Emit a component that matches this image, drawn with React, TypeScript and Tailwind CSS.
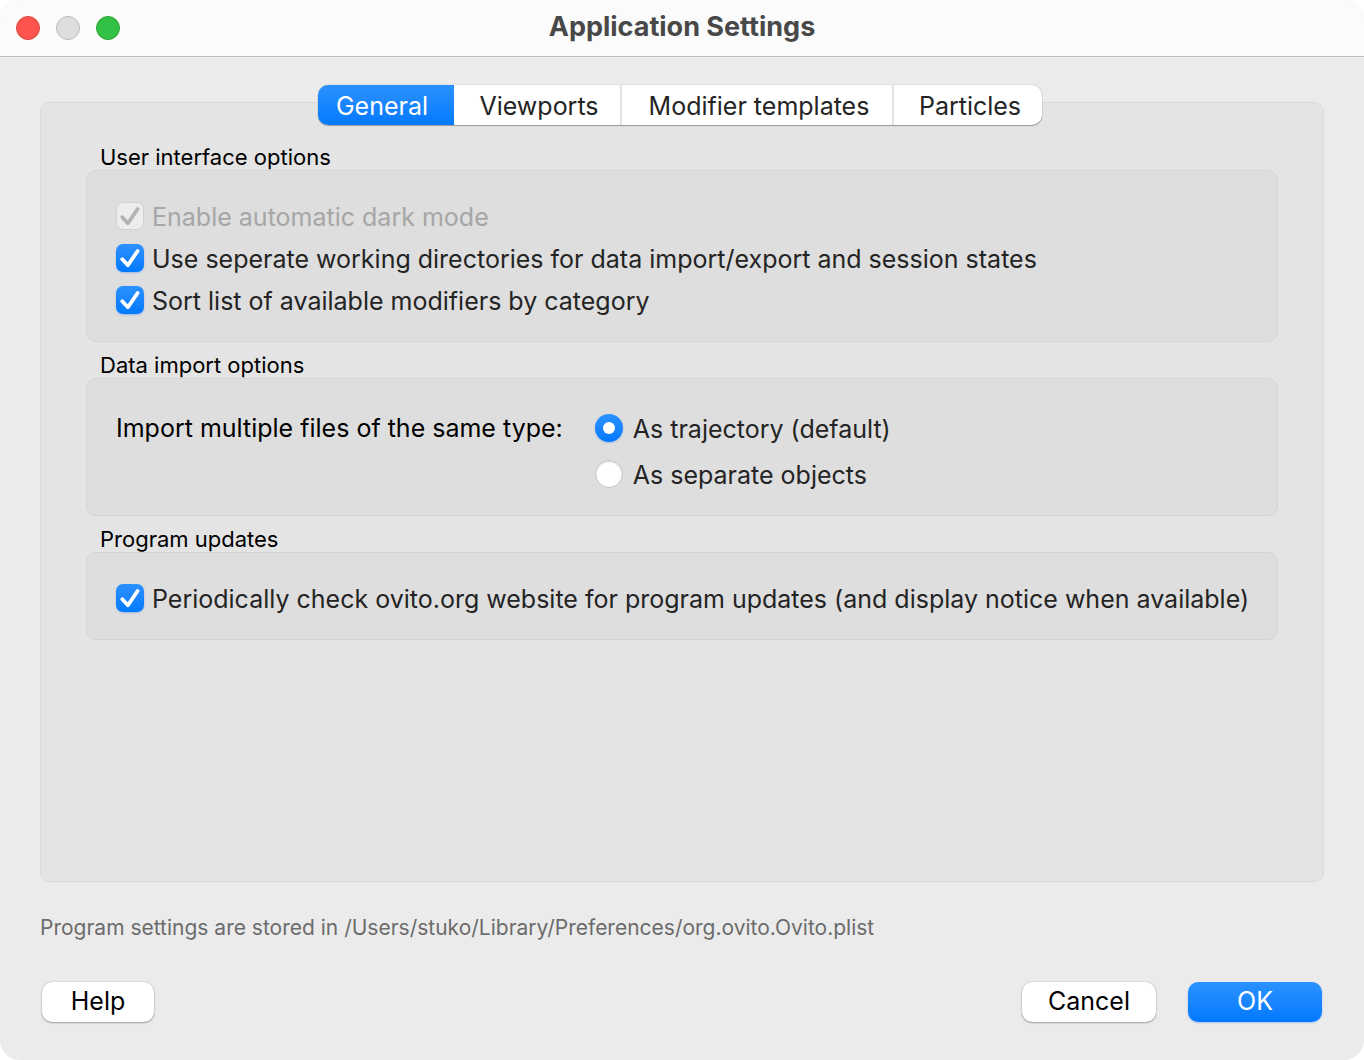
import { useState, type ReactNode } from "react";

const TABS = [
  { name: "General", width: "w-[136px]" },
  { name: "Viewports", width: "w-[168px]" },
  { name: "Modifier templates", width: "w-[272px]" },
  { name: "Particles", width: "w-[148px]" },
];

const BLUE = "bg-linear-to-b from-[#2a91ff] to-[#0079ff]";
const WHITE_BUTTON =
  "h-10 rounded-[10px] bg-white pb-0.5 text-[25px] leading-8 text-black shadow-[0_0_1px_rgba(0,0,0,0.35),0_1px_2px_rgba(0,0,0,0.3)]";

function Group({ title, pad, children }: { title: string; pad: string; children: ReactNode }) {
  return (
    <fieldset className="mb-2.5 min-w-0">
      <legend className="h-[26px] pl-3.5 text-[22px] leading-[26px] text-black">{title}</legend>
      <div className={`rounded-[10px] border border-[#d4d4d4] bg-[#dedede] ${pad}`}>{children}</div>
    </fieldset>
  );
}

function Tick() {
  return (
    <svg viewBox="0 0 28 28" className="pointer-events-none col-start-1 row-start-1 size-7" fill="none" aria-hidden="true">
      <path d="M6.3 15.2 11.9 21.2 21.6 7" stroke="currentColor" strokeWidth="3.8" strokeLinecap="round" strokeLinejoin="round" />
    </svg>
  );
}

function Check({ label, disabled = false }: { label: string; disabled?: boolean }) {
  const [on, setOn] = useState(true);
  const look =
    on && !disabled
      ? "bg-linear-to-b from-[#2a91ff] to-[#0079ff] shadow-[0_1px_2px_rgba(0,100,255,0.3)]"
      : "border border-[#d2d2d2] bg-[#ededed]";
  return (
    <label className={`flex h-[42px] items-center gap-2 text-[25px] leading-8 ${disabled ? "text-[#a6a6a6]" : "text-[#242424]"}`}>
      <span className={`grid shrink-0 ${disabled ? "text-[#b3b3b3]" : "text-white"}`}>
        <input
          type="checkbox"
          checked={on}
          disabled={disabled}
          onChange={(e) => setOn(e.target.checked)}
          className={`col-start-1 row-start-1 size-7 appearance-none rounded-[7px] ${look}`}
        />
        {on && <Tick />}
      </span>
      <span className="pt-0.5 whitespace-nowrap">{label}</span>
    </label>
  );
}

function Radio({ label, checked, onSelect }: { label: string; checked: boolean; onSelect: () => void }) {
  return (
    <label className="flex h-[46px] items-center gap-2.5 text-[25px] leading-8 text-[#242424]">
      <span className="grid shrink-0 place-items-center">
        <input
          type="radio"
          name="import-mode"
          checked={checked}
          onChange={onSelect}
          className={`col-start-1 row-start-1 size-7 appearance-none rounded-full ${
            checked
              ? "bg-linear-to-b from-[#2a91ff] to-[#0079ff] shadow-[0_1px_2px_rgba(0,100,255,0.3)]"
              : "border border-[#c6c6c6] bg-white shadow-[inset_0_1px_2px_rgba(0,0,0,0.15)]"
          }`}
        />
        {checked && <span className="pointer-events-none col-start-1 row-start-1 size-3 rounded-full bg-white" />}
      </span>
      <span className="pt-0.5 whitespace-nowrap">{label}</span>
    </label>
  );
}

export default function App() {
  const [tab, setTab] = useState("General");
  const [mode, setMode] = useState("trajectory");

  return (
    <div className="flex min-h-screen flex-col overflow-hidden rounded-[20px] bg-[#ebebeb] font-['Inter','Liberation_Sans',sans-serif]">
      <header className="grid h-[57px] shrink-0 grid-cols-[1fr_auto_1fr] items-center border-b border-[#bdbdbd] bg-[#fbfbfb] px-4">
        <div className="flex gap-4">
          <button aria-label="Close" className="size-6 rounded-full border border-[#e0443e] bg-[#ff544d]" />
          <button aria-label="Minimize" disabled className="size-6 rounded-full border border-[#bcbcbc] bg-[#dddddd]" />
          <button aria-label="Zoom" className="size-6 rounded-full border border-[#27a536] bg-[#32c146]" />
        </div>
        <h1 className="pb-0.5 text-[27px] leading-8 font-bold text-[#484848]">Application Settings</h1>
      </header>

      <main className="flex grow flex-col px-10 pt-7">
        <div
          role="tablist"
          className="z-10 mr-1 flex h-10 self-center rounded-[10px] bg-white shadow-[0_0_1px_rgba(0,0,0,0.4),0_1px_1px_rgba(0,0,0,0.3)]"
        >
          {TABS.map(({ name, width }, i) => (
            <button
              key={name}
              role="tab"
              aria-selected={tab === name}
              onClick={() => setTab(name)}
              className={`${width} pt-0.5 text-[25px] leading-8 whitespace-nowrap first:rounded-l-[10px] first:pr-2 not-first:pl-1 last:rounded-r-[10px] ${
                tab === name ? `${BLUE} text-white` : "text-[#242424]"
              } ${i > 0 && i < TABS.length - 1 ? "border-r-2 border-[#e2e2e2]" : ""}`}
            >
              {name}
            </button>
          ))}
        </div>

        <section className="-mt-[23px] grow rounded-[10px] border border-[#d9d9d9] bg-[#e4e4e4] px-[45px] pt-[41px]">
          <Group title="User interface options" pad="px-[29px] pt-6 pb-5">
            <Check label="Enable automatic dark mode" disabled />
            <Check label="Use seperate working directories for data import/export and session states" />
            <Check label="Sort list of available modifiers by category" />
          </Group>
          <Group title="Data import options" pad="px-[29px] pt-[26px] pb-[18px]">
            <div role="radiogroup" aria-labelledby="import-label" className="flex gap-8">
              <span id="import-label" className="h-[46px] text-[25px] leading-[46px] whitespace-nowrap text-black">
                Import multiple files of the same type:
              </span>
              <div>
                <Radio label="As trajectory (default)" checked={mode === "trajectory"} onSelect={() => setMode("trajectory")} />
                <Radio label="As separate objects" checked={mode === "objects"} onSelect={() => setMode("objects")} />
              </div>
            </div>
          </Group>
          <Group title="Program updates" pad="px-[29px] pt-6 pb-5">
            <Check label="Periodically check ovito.org website for program updates (and display notice when available)" />
          </Group>
        </section>

        <p className="pt-8 text-[21px] leading-7 text-[#6b6b6b]">
          Program settings are stored in /Users/stuko/Library/Preferences/org.ovito.Ovito.plist
        </p>
      </main>

      <footer className="flex px-[42px] pt-10 pb-[38px]">
        <button className={`${WHITE_BUTTON} w-28`}>Help</button>
        <button className={`${WHITE_BUTTON} ml-auto w-[134px]`}>Cancel</button>
        <button className={`${BLUE} ml-8 h-10 w-[134px] rounded-[10px] pb-0.5 text-[25px] leading-8 text-white shadow-[0_1px_2px_rgba(0,100,255,0.3)]`}>
          OK
        </button>
      </footer>
    </div>
  );
}
